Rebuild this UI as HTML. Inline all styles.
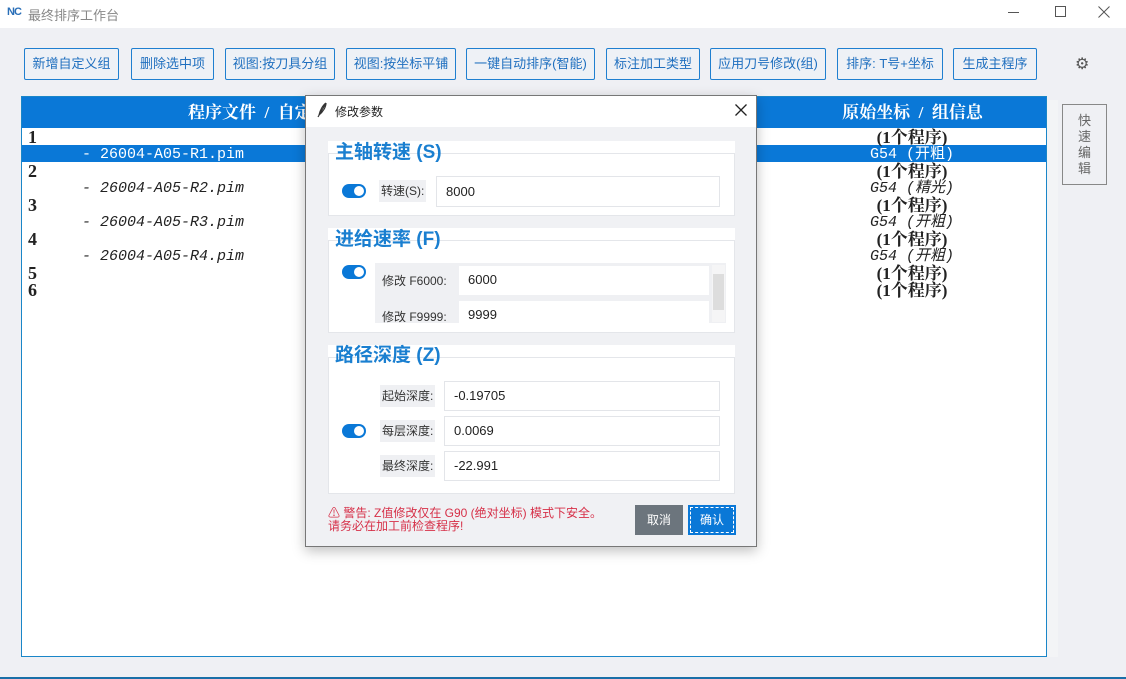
<!DOCTYPE html>
<html><head><meta charset="utf-8"><style>
*{margin:0;padding:0;box-sizing:border-box}
body{width:1126px;height:679px;background:#eff0f4;position:relative;overflow:hidden;font-family:"Liberation Sans","Noto Sans CJK SC",sans-serif;}
.a{position:absolute}
.btn{position:absolute;top:48px;height:32px;border:1px solid #1f7fd0;background:#eef1f6;color:#1f6fbf;font-size:13px;line-height:30px;text-align:center;border-radius:2px}
.hdr{position:absolute;top:97px;height:31px;background:#0a78d7;color:#fff;font-family:"Liberation Serif","Noto Serif CJK SC",serif;font-weight:bold;font-size:17px;line-height:31px;text-align:center;white-space:pre}
.num{position:absolute;left:28px;font-family:"Liberation Serif",serif;font-weight:bold;font-size:18px;color:#222;line-height:17px}
.fn{position:absolute;left:82px;font-family:"Liberation Mono",monospace;font-style:italic;font-size:15px;color:#222;line-height:17px}
.rc{position:absolute;left:840px;width:144px;text-align:center;font-family:"Liberation Serif","Noto Serif CJK SC",serif;font-size:17px;font-weight:bold;color:#222;line-height:17px}
.rci{font-weight:normal;font-style:italic;font-family:"Liberation Mono","Noto Sans CJK SC",monospace;font-size:15px}
.gt{position:absolute;left:335px;color:#1a7fd0;font-weight:bold;font-size:19px;line-height:24px;font-family:"Liberation Sans","Noto Sans CJK SC",sans-serif}
.box{position:absolute;left:328px;width:407px;background:#fff;border:1px solid #e4e6ea}
.tg{position:absolute;left:342px;width:24px;height:14px;background:#0a78d7;border-radius:7px}
.tg:after{content:"";position:absolute;right:2px;top:2px;width:10px;height:10px;border-radius:5px;background:#fff}
.lb{position:absolute;font-size:12px;color:#333;background:#eff0f3;line-height:22px;padding:0 2px}
.in{position:absolute;background:#fff;border:1px solid #e3e5e9;font-size:13px;color:#222;padding-left:9px}
</style></head><body>
<div class="a" style="left:0;top:0;width:1126px;height:28px;background:#fff"></div>
<div class="a" style="left:7px;top:6px;font-size:11px;font-weight:bold;color:#2a6fb8;letter-spacing:-1px">NC</div>
<div class="a" style="left:28px;top:5px;font-size:13px;color:#888">最终排序工作台</div>
<div class="a" style="left:1008px;top:12px;width:11px;height:1px;background:#555"></div>
<div class="a" style="left:1055px;top:6px;width:11px;height:11px;border:1px solid #555"></div>
<svg class="a" style="left:1098px;top:6px" width="12" height="12"><path d="M0.5 0.5L11.5 11.5M11.5 0.5L0.5 11.5" stroke="#555" stroke-width="1"/></svg>

<div class="btn" style="left:24px;width:95px">新增自定义组</div>
<div class="btn" style="left:131px;width:83px">删除选中项</div>
<div class="btn" style="left:225px;width:110px">视图:按刀具分组</div>
<div class="btn" style="left:346px;width:110px">视图:按坐标平铺</div>
<div class="btn" style="left:466px;width:129px">一键自动排序(智能)</div>
<div class="btn" style="left:606px;width:94px">标注加工类型</div>
<div class="btn" style="left:710px;width:116px">应用刀号修改(组)</div>
<div class="btn" style="left:837px;width:106px">排序: T号+坐标</div>
<div class="btn" style="left:953px;width:84px">生成主程序</div>
<div class="a" style="left:1075px;top:54px;font-size:16px;color:#555">⚙</div>

<div class="a" style="left:21px;top:96px;width:1026px;height:561px;background:#fff;border:1px solid #1a86c8"></div>
<div class="a" style="left:1047px;top:100px;width:11px;height:557px;background:#f3f4f6"></div>
<div class="hdr" style="left:22px;width:1024px"></div>
<div class="hdr" style="left:188px;width:200px;background:transparent;text-align:left">程序文件  /  自定</div>
<div class="hdr" style="left:780px;width:265px;background:transparent">原始坐标  /  组信息</div>
<div class="a" style="left:22px;top:145px;width:1024px;height:17px;background:#0a78d7"></div>
<div class="num" style="top:129px">1</div>
<div class="fn" style="top:146px;color:#fff;font-style:normal">- 26004-A05-R1.pim</div>
<div class="num" style="top:163px">2</div>
<div class="fn" style="top:180px">- 26004-A05-R2.pim</div>
<div class="num" style="top:197px">3</div>
<div class="fn" style="top:214px">- 26004-A05-R3.pim</div>
<div class="num" style="top:231px">4</div>
<div class="fn" style="top:248px">- 26004-A05-R4.pim</div>
<div class="num" style="top:265px">5</div>
<div class="num" style="top:282px">6</div>
<div class="rc" style="top:129px">(1个程序)</div>
<div class="rc rci" style="top:146px;color:#fff;font-style:normal">G54 (开粗)</div>
<div class="rc" style="top:163px">(1个程序)</div>
<div class="rc rci" style="top:180px">G54 (精光)</div>
<div class="rc" style="top:197px">(1个程序)</div>
<div class="rc rci" style="top:214px">G54 (开粗)</div>
<div class="rc" style="top:231px">(1个程序)</div>
<div class="rc rci" style="top:248px">G54 (开粗)</div>
<div class="rc" style="top:265px">(1个程序)</div>
<div class="rc" style="top:282px">(1个程序)</div>
<div class="a" style="left:1062px;top:104px;width:45px;height:81px;border:1px solid #888;background:#eff0f4;color:#666;font-size:13px;line-height:16px;text-align:center;padding-top:8px">快<br>速<br>编<br>辑</div>
<div class="a" style="left:0;top:677px;width:1126px;height:2px;background:#1a6fa8"></div>

<!-- dialog -->
<div class="a" style="left:305px;top:95px;width:452px;height:452px;background:#f0f1f4;border:1px solid #777;box-shadow:0 4px 12px rgba(0,0,0,.25)"></div>
<div class="a" style="left:306px;top:96px;width:450px;height:31px;background:#fff"></div>
<svg class="a" style="left:316px;top:102px" width="12" height="16"><path d="M2 15L10 1M10 1C7 3 4 8 3 13M10 1C10 5 7 10 3 13" stroke="#333" stroke-width="1.2" fill="none"/></svg>
<div class="a" style="left:335px;top:103px;font-size:12px;color:#222">修改参数</div>
<svg class="a" style="left:735px;top:104px" width="12" height="12"><path d="M0.5 0.5L11.5 11.5M11.5 0.5L0.5 11.5" stroke="#222" stroke-width="1.3"/></svg>

<div class="box" style="top:153px;height:63px"></div>
<div class="a" style="left:328px;top:141px;width:407px;height:12px;background:#fff"></div>
<div class="gt" style="top:141px">主轴转速 (S)</div>
<div class="tg" style="top:184px"></div>
<div class="lb" style="left:379px;top:180px">转速(S):</div>
<div class="in" style="left:436px;top:176px;width:284px;height:31px;line-height:29px">8000</div>

<div class="box" style="top:240px;height:93px"></div>
<div class="a" style="left:328px;top:228px;width:407px;height:12px;background:#fff"></div>
<div class="gt" style="top:228px">进给速率 (F)</div>
<div class="tg" style="top:265px"></div>
<div class="a" style="left:375px;top:263px;width:351px;height:60px;background:#eff0f3"></div>
<div class="a" style="left:712px;top:265px;width:13px;height:57px;background:#f5f5f6"></div>
<div class="a" style="left:713px;top:274px;width:11px;height:36px;background:#ddd"></div>
<div class="a" style="left:382px;top:272px;font-size:12px;color:#333">修改 F6000:</div>
<div class="in" style="left:459px;top:266px;width:250px;height:29px;line-height:27px;border:none">6000</div>
<div class="a" style="left:382px;top:308px;font-size:12px;color:#333">修改 F9999:</div>
<div class="in" style="left:459px;top:301px;width:250px;height:22px;line-height:27px;border:none;overflow:hidden">9999</div>

<div class="box" style="top:357px;height:137px"></div>
<div class="a" style="left:328px;top:345px;width:407px;height:12px;background:#fff"></div>
<div class="gt" style="top:344px">路径深度 (Z)</div>
<div class="tg" style="top:424px"></div>
<div class="lb" style="left:380px;top:385px">起始深度:</div>
<div class="lb" style="left:380px;top:420px">每层深度:</div>
<div class="lb" style="left:380px;top:455px">最终深度:</div>
<div class="in" style="left:444px;top:381px;width:276px;height:30px;line-height:28px">-0.19705</div>
<div class="in" style="left:444px;top:416px;width:276px;height:30px;line-height:28px">0.0069</div>
<div class="in" style="left:444px;top:451px;width:276px;height:30px;line-height:28px">-22.991</div>

<div class="a" style="left:328px;top:507px;font-size:12px;color:#d63048;line-height:13px">⚠ 警告: Z值修改仅在 G90 (绝对坐标) 模式下安全。<br>请务必在加工前检查程序!</div>
<div class="a" style="left:635px;top:505px;width:48px;height:30px;background:#6c757d;color:#fff;font-size:12px;line-height:30px;text-align:center">取消</div>
<div class="a" style="left:688px;top:505px;width:48px;height:30px;background:#0a78d7;color:#fff;font-size:12px;line-height:26px;text-align:center;border:2px solid #0a78d7;outline:1px dashed #fff;outline-offset:-3px">确认</div>
</body></html>
